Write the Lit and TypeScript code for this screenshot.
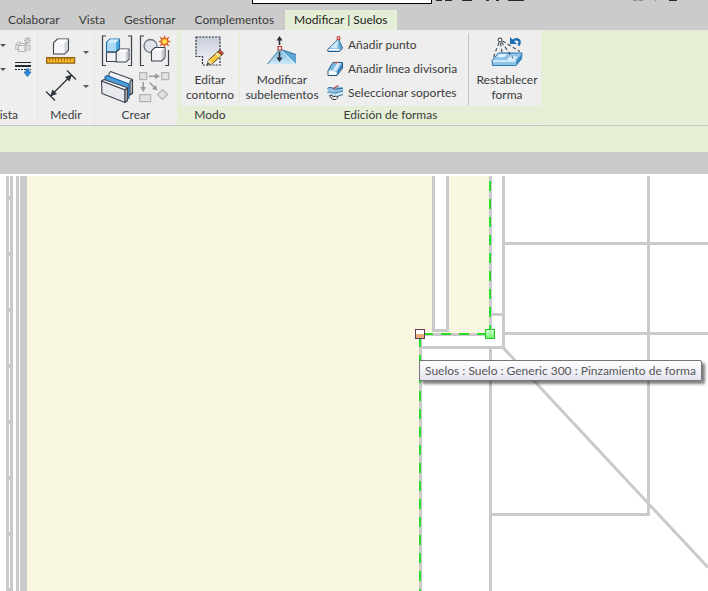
import { LitElement, html, css, svg } from "lit";
import { customElement, property, state } from "lit/decorators.js";

const cube = (x: number, y: number, s: number, d: number, front: string, top: string, side: string) => svg`
  <path d="M${x} ${y}l${d} ${-d}h${s}v${s}l${-d} ${d}h${-s}z" fill=${front} stroke="#3c434d" stroke-width="1.1" stroke-linejoin="round"/>
  <path d="M${x + 0.7} ${y}l${d} ${-d + 0.6}h${s - 1.4}l${-d} ${d}z" fill=${top}/>
  <path d="M${x + s} ${y}l${d - 0.6} ${-d + 0.6}v${s - 0.8}l${-d + 0.6} ${d}z" fill=${side}/>`;

const ICONS: Record<string, { w: number; h: number; art: unknown }> = {
  hidden: {
    w: 17, h: 16,
    art: svg`<g fill="none" stroke="#b4b4b4" stroke-width="1.1">
      <path d="M3.5 8.5l2-2h6l-1.500 2zM3.500 8.500v6h6.500v-6M10 14.500l2-2.500v-5"/>
      <path d="M3 8H.8v4.500H3M1 8l2-3h3M13 8.500h2v3.500l-2 1.500"/>
      <path d="M12.500 0v7M9 3.500h7M10 1l5 5M15 1l-5 5"/></g>
      <circle cx="12.500" cy="3.500" r="1.500" fill="#eee" stroke="#b4b4b4"/>`,
  },
  lines: {
    w: 17, h: 16,
    art: svg`<path d="M0 1.500h16" stroke="#222a33" stroke-width="1"/><path d="M0 5h16" stroke="#222a33" stroke-width="2"/>
      <path d="M0 8.500h16" stroke="#222a33" stroke-dasharray="2 1"/>
      <path d="M11 8h3v3h2l-3.500 4.500L9 11h2z" fill="#2c8de0" stroke="#1464ac" stroke-width=".8"/>`,
  },
  measure: {
    w: 30, h: 28,
    art: svg`${cube(7.5, 5, 11, 4, "#f4f5f8", "#ffffff", "#cfd2d8")}
      <path d="M.6 19.600h28v5.500H.6z" fill="#f0b429" stroke="#8e6112" stroke-width="1.200"/>
      <path d="M3.500 20v2.500M6.500 20v2.500M9.500 20v2.500M12.500 20v2.500M15.500 20v2.500M18.500 20v2.500M21.500 20v2.500M24.500 20v2.500" stroke="#8e6112" stroke-width=".9"/>`,
  },
  dimension: {
    w: 30, h: 32,
    art: svg`<g stroke="#2d343d" stroke-width="1.300"><path d="M4.500 26L25.500 5M0 21.500l9 9M21 .5l9 9"/></g>
      <path d="M4 26.500l2.500-7 4.500 4.500zM26 4.500l-7 2.500 4.500 4.500z" fill="#2d343d"/>`,
  },
  group: {
    w: 32, h: 32,
    art: svg`<path d="M5 1H1.500v29.500H5M27 1h3.500v29.500H27" fill="none" stroke="#3a424d" stroke-width="1.200"/>
      ${cube(15, 17, 10, 3, "#f1f2f6", "#ffffff", "#c9ccd4")}
      ${cube(5.5, 17, 9.5, 0, "#f1f2f6", "#ffffff", "#c9ccd4")}
      <path d="M5.500 7.500L9 4h9.500v9.500L15 17H5.500z" fill="#a9d9f5" stroke="#2671a8" stroke-width="1.100" stroke-linejoin="round"/>
      <path d="M6.200 7.500L9.200 4.600h8.600l-3 2.900z" fill="#d9f1fd"/><path d="M15 7.500l3-3v8.800l-3 3z" fill="#4fa6dc"/>
      <path d="M5.500 17H15l3.500-3" fill="none" stroke="#3c434d" stroke-width="1.100"/>`,
  },
  create: {
    w: 33, h: 32,
    art: svg`<path d="M5 1H1.500v29.500H5M29.500 15v15.500H26" fill="none" stroke="#3a424d" stroke-width="1.200"/>
      <circle cx="11.500" cy="11" r="6.500" fill="#dfe4ea" stroke="#6e7782" stroke-width="1.300"/>
      ${cube(12.5, 16, 10, 3.5, "#f1f2f6", "#ffffff", "#c9ccd4")}
      <path d="M25.500 0l1.300 3.500 3.700-2-2 3.700 3.500 1.300-3.500 1.300 2 3.700-3.700-2-1.300 3.500-1.300-3.500-3.700 2 2-3.700L19 6.500l3.500-1.300-2-3.700 3.700 2z" fill="#d9541a"/>
      <circle cx="25.500" cy="6.500" r="2.600" fill="#ffe25c" stroke="#f4a024"/>`,
  },
  parts: {
    w: 33, h: 33,
    art: svg`<g stroke-linejoin="round" stroke="#3c434d" stroke-width="1.100">
      <path d="M8 2.500L9.500 .5 31.500 8.500V22l-3 2L8 16z" fill="#f1f2f6"/>
      <path d="M29 10.500l2.500-2V22L29 24z" fill="#b9bdc6"/>
      <path d="M4 6l2-1.500 22 8.500v14l-3 1.500L4 20z" fill="#4c9fdd" stroke="#1d5f9e"/>
      <path d="M.5 10l2.500-1.500 23 8-2 2.500z" fill="#fff"/>
      <path d="M.5 10L24 19v12.500L1 22.500z" fill="#e6e8ed"/>
      <path d="M24 19l2.500-2v12.500L24 31.500z" fill="#aeb3bc"/></g>`,
  },
  assembly: {
    w: 33, h: 32,
    art: svg`<g fill="#e2e2e2" stroke="#b2b2b2" stroke-width="1.200"><path d="M.7.7h7v7h-7zM22.700.7h7v7h-7zM.7 22.700h11v7H.7zM23.500 17.500l5 5-5 5-5-5z"/></g>
      <path d="M10 4.200h7M4.200 10v6M10.500 10.500l5 5" stroke="#9c9c9c" stroke-width="1.500"/>
      <path d="M16 1.200l5 3-5 3zM1.200 15l3 5 3-5zM18.500 18.500l-5.500-1.500 4-4z" fill="#9c9c9c"/>`,
  },
  contour: {
    w: 30, h: 32,
    art: svg`<linearGradient id="sheet" x2="0" y2="1"><stop offset="0" stop-color="#c9cedb"/><stop offset="1" stop-color="#f2f3f6"/></linearGradient>
      <path d="M1 1h24v28H7.500v-8.500H1z" fill="url(#sheet)" stroke="#262c35" stroke-width="1.200" stroke-dasharray="2 1.200"/>
      <path d="M12 29l1.500-5L23 15.500l4 3.500-9.500 8.500z" fill="#f6c944" stroke="#5a4518" stroke-width="1"/>
      <path d="M23 15.500l2-1.500 3.500 3-1.500 2z" fill="#d2513c" stroke="#5a2c20" stroke-width=".8"/>
      <path d="M21 17.300l4 3.500" stroke="#f4f0d8" stroke-width="1.500"/><path d="M12 29l1.500-5 4 3.500z" fill="#efdcb4"/><path d="M12 29l.8-2.500 2 1.500z" fill="#222"/>`,
  },
  subelements: {
    w: 30, h: 32,
    art: svg`<linearGradient id="slope" x2="0" y2="1"><stop offset="0" stop-color="#6fb4dc"/><stop offset="1" stop-color="#d3ebf8"/></linearGradient>
      <path d="M.5 28.500L13 13l16 5.500v10z" fill="url(#slope)"/><path d="M13 13l16 5.500v9.500z" fill="#5ba3d0"/>
      <path d="M13 13L28.500 28" stroke="#e6f5fd" stroke-width="1"/>
      <path d="M.5 28L12 14M14 13.500l15 5" stroke="#31719c" stroke-width=".9"/>
      <path d="M12.500 9V3M12.500 16v7" stroke="#28303a" stroke-width="1.600"/>
      <path d="M12.500 0l3 4.500h-6zM12.500 26l3.200-4.500H9.300z" fill="#28303a"/>
      <path d="M11 10.500h3.500V14H11z" fill="#fff" stroke="#c5392d" stroke-width="1.200"/>`,
  },
  point: {
    w: 17, h: 17,
    art: svg`<path d="M.7 13.500L11.500 3l4 9-3 3.500H1z" fill="#8dc3e5" stroke="#235d89" stroke-width="1" stroke-linejoin="round"/>
      <path d="M3 11.500L11 4l-1 8.500z" fill="#cfe7f6"/><path d="M11.500 3l3.500 8.500-2.500 2.500z" fill="#5b9fcd"/><path d="M1.500 13.700h11" stroke="#fff" stroke-width="1.400"/>
      <path d="M10.300.7h2.400v2.800h-2.400z" fill="#fff" stroke="#c5392d" stroke-width="1.100"/>`,
  },
  split: {
    w: 17, h: 17,
    art: svg`<path d="M1 10.500L6 2.500h9.500v5.500L10 15.500H1z" fill="#7db8de" stroke="#1e5682" stroke-width="1" stroke-linejoin="round"/>
      <path d="M5.500 10.500L10.500 3h3L9.500 11z" fill="#d7ecf8"/><path d="M1.600 10.500h3.400L9.500 12v3H1.600z" fill="#f4fafd"/>
      <path d="M10 11.500L15 4v4l-5 6.500z" fill="#3f86ba"/><path d="M7 2.500h4.500" stroke="#b84a42" stroke-width="1.200"/>`,
  },
  supports: {
    w: 17, h: 17,
    art: svg`<path d="M.5 4.500C4 1.500 7 5 10.500 1.500L16 4v3c-4-1-6 3-9 2L.5 7z" fill="#8fc6e8"/>
      <path d="M.5 4.500C4 1.500 7 6.500 10 5l6-1" fill="none" stroke="#2b638d" stroke-width="1"/>
      <path d="M6 5l5-3.500" stroke="#c33f37" stroke-width="1.100"/>
      <path d="M.5 8.500C5 7 6 10.500 10 8.500l6-1.500v3.500c-3 0-4 3.500-8 2.500L.5 11z" fill="#cfe6f4"/>
      <path d="M.5 8.500C5 7 6 10.500 10 8.500l6-1.500M10 12.500l6-2" fill="none" stroke="#38729c" stroke-width="1"/>
      <path d="M2.500 11.500l2.500-.5 1 2 3-1 2 1.500-2 2H6L4 14z" fill="#f8f8f8" stroke="#333b45" stroke-width="1"/>`,
  },
  reset: {
    w: 33, h: 32,
    art: svg`<path d="M1 24.500L7.500 17H31l-.5 6-5.500 6.500H1.500z" fill="#8fc5e8" stroke="#2c79b0" stroke-width="1" stroke-linejoin="round"/>
      <path d="M8 18h8l-2.500 3H5.500zM19 20.500h7.500L23.500 24H16zM5 23h7" fill="#e2f3fd"/>
      <path d="M2 25h23" fill="none" stroke="#f2faff" stroke-width="1.300"/>
      <path d="M25 25v4.500l5.500-6.500v-5z" fill="#3b8bc2"/>
      <path d="M8 6.500L2.500 21M9.500 7l1.500 10M10.500 6L22 22.500M11.500 5L29 15.500" fill="none" stroke="#4a525d" stroke-width="1.200" stroke-dasharray="3.500 2.500"/>
      <circle cx="9" cy="4" r="1.900" fill="#fff" stroke="#4a525d" stroke-width="1.100"/>
      <path d="M22 4.500c4.500-3 8.500 0 5.500 5" fill="none" stroke="#1c6fb3" stroke-width="2.400"/><path d="M19 1v7h7z" fill="#1c6fb3"/>`,
  },
};

@customElement("ribbon-icon")
class RibbonIcon extends LitElement {
  @property() name = "";
  static styles = css`
    :host { display: block; flex: none; }
    svg { display: block; overflow: visible; }
  `;
  render() {
    const i = ICONS[this.name];
    return html`<svg width=${i.w} height=${i.h} viewBox="0 0 ${i.w} ${i.h}" aria-hidden="true">${i.art}</svg>`;
  }
}

@customElement("ribbon-panel")
class RibbonPanel extends LitElement {
  @property() label = "";
  static styles = css`
    :host { display: flex; flex-direction: column; flex: none; box-sizing: border-box; background: #eeeeee; }
    .body { display: flex; height: 76px; box-sizing: border-box; }
    .title { display: flex; justify-content: center; height: 18px; line-height: 18px; white-space: nowrap; background: var(--title-bg, #eeeeee); }
    :host([cut]) { overflow: hidden; }
    :host([cut]) .title { justify-content: flex-end; padding-right: 19px; }
  `;
  render() {
    return html`<div class="body"><slot></slot></div><div class="title">${this.label}</div>`;
  }
}

@customElement("plan-view")
class PlanView extends LitElement {
  static styles = css`
    :host { display: block; position: relative; overflow: hidden; background: #fff; border-top: 2px solid #fff; }
    .plan { display: block; width: 100%; height: 415px; }
    .wall { fill: none; stroke: #cacaca; stroke-width: 3; }
    .floor { fill: #f9f7e2; }
    .edge { fill: none; stroke: #2bdc2b; stroke-width: 2; stroke-dasharray: 10 8; }
    .tip {
      position: absolute; left: 419px; top: 184px; box-sizing: border-box; height: 21px; padding: 0 5px;
      line-height: 19px; white-space: nowrap; color: #575757; border: 1px solid #767676; border-radius: 2px;
      background: linear-gradient(#ffffff, #e4e5f0); box-shadow: 3px 3px 3px rgba(0, 0, 0, 0.5);
    }
  `;
  render() {
    const joints = [20, 76, 132, 188, 244, 300, 356, 412];
    return html`
      <svg class="plan" role="img" aria-label="Plano de planta">
        <defs>
          <linearGradient id="hot" x2="0" y2="1"><stop offset=".45" stop-color="#fff"/><stop offset=".55" stop-color="#e9aa7c"/></linearGradient>
          <linearGradient id="ok" x2="0" y2="1"><stop offset="0" stop-color="#d4ffd4"/><stop offset="1" stop-color="#6cf56c"/></linearGradient>
        </defs>
        <path class="floor" d="M27 0H490V158H420V415H27z"/>
        <path d="M20 0h7v415h-7z" fill="#cacacc"/>
        <path class="wall" d="M7.500 0V415M11.500 0V415M17.500 0V415"/>
        ${joints.map((y) => svg`<rect x="9" y=${y} width="3" height="4" fill="#cacaca"/>`)}
        <path d="M433 0h14v155h-14z" fill="#fff"/>
        <path class="wall" d="M433.500 0V154.500H447.500V0"/>
        <path class="wall" d="M490.500 0V158.500H420.500V415M503.500 0V171.500H421M503 67.500H708M492 138.500H503M504 157.500H708M490.500 173V415M648.500 0V338.500H490M503 171.500L708 391.500"/>
        <path class="edge" d="M490 5V158"/>
        <path class="edge" d="M423 158H488"/>
        <path class="edge" d="M420 161V415"/>
        <rect x="415.500" y="153.500" width="9" height="9" fill="url(#hot)" stroke="#5c3a5a"/>
        <rect x="485.500" y="153.500" width="9" height="9" fill="url(#ok)" stroke="#28c828"/>
      </svg>
      <div class="tip" role="tooltip">Suelos : Suelo : Generic 300 : Pinzamiento de forma</div>`;
  }
}

@customElement("app-root")
class AppRoot extends LitElement {
  @state() private active = "Modificar | Suelos";

  static styles = css`
    :host { display: flex; flex-direction: column; min-height: 100vh; overflow: hidden; background: #fff; color: #3b3b3b; font: 12px/15px Lato, "Open Sans", sans-serif; }
    button { font: inherit; color: inherit; border: 0; background: none; padding: 0; margin: 0; white-space: nowrap; }
    .top { display: flex; height: 10px; background: #cbcbcb; align-items: flex-start; }
    .search { box-sizing: border-box; width: 180px; height: 4px; margin: 0 4px 0 252px; padding: 0; border: 1px solid #000; border-top: 0; background: #fff; }
    .tools { display: block; }
    .tabs { display: flex; gap: 3px; height: 20px; background: #cbcbcb; }
    .tab { padding: 0 8px; line-height: 20px; }
    .tab.active { padding: 0 9px; background: #e4efd6; color: #222; }
    .ribbon { display: flex; height: 95px; background: #e4efd6; border-bottom: 1px solid #c4cac4; color: #3b3b3b; }
    .view { width: 38px; border-right: 1px solid #e6e8da; }
    .measure { width: 57px; border-right: 1px solid #e6e8da; }
    .make { width: 82px; margin-right: 4px; }
    .mode { width: 58px; margin-right: 1px; --title-bg: #e4efd6; }
    .shapes { width: 301px; --title-bg: #e4efd6; }
    .stack { display: flex; flex-direction: column; gap: 8px; padding: 7px 0 0; }
    .row { display: flex; align-items: center; gap: 9px; height: 16px; }
    .arrow { width: 0; height: 0; border: 3px solid transparent; border-top-color: #555; border-bottom: 0; flex: none; }
    .cells { display: grid; grid-template-columns: 31px 6px; column-gap: 6px; row-gap: 4px; padding: 8px 0 0 8px; align-content: start; align-items: center; }
    .pair { display: grid; grid-template-columns: 33px 33px; gap: 4px 5px; padding: 5px 0 0 6px; align-content: start; }
    .big { display: flex; flex-direction: column; align-items: center; gap: 4px; padding-top: 6px; width: 100%; }
    .sub { width: 84px; margin-right: 3px; flex: none; }
    .reset { flex: 1; border-left: 1px solid #c4c4c4; height: 72px; margin-top: 3px; padding-top: 3px; padding-left: 4px; }
    .list { display: flex; flex-direction: column; gap: 8px; padding: 6px 0 0; width: 141px; flex: none; }
    .item { display: flex; align-items: center; gap: 4px; height: 16px; }
    .options { height: 26px; background: #e4efd6; }
    .bar { height: 22px; background: #cbcbcb; }
    .plan { flex: 1; }
  `;

  private tab(name: string) {
    return html`<button class="tab ${this.active === name ? "active" : ""}" role="tab" aria-selected=${this.active === name} @click=${() => (this.active = name)}>${name}</button>`;
  }

  private icon(name: string, label: string) {
    return html`<button aria-label=${label}><ribbon-icon name=${name}></ribbon-icon></button>`;
  }

  private item(icon: string, label: string) {
    return html`<button class="item"><ribbon-icon name=${icon}></ribbon-icon>${label}</button>`;
  }

  render() {
    return html`
      <header class="top">
        <input class="search" aria-label="Buscar" />
        <svg class="tools" width="260" height="2" aria-hidden="true">
          <path d="M0 .5h6M9 .5h7M26 .5h10M50 .5h3M60 .5h3M72 .5h16M233 .5h8" stroke="#2a2a2e"/>
          <path d="M197 .5h4M203 .5h4M219 .5h1" stroke="#8e8e8e"/>
        </svg>
      </header>
      <nav class="tabs" role="tablist">
        ${["Colaborar", "Vista", "Gestionar", "Complementos", "Modificar | Suelos"].map((t) => this.tab(t))}
      </nav>
      <section class="ribbon">
        <ribbon-panel class="view" label="Vista" cut>
          <div class="stack">
            <div class="row"><span class="arrow"></span>${this.icon("hidden", "Ocultar")}</div>
            <div class="row"><span class="arrow"></span>${this.icon("lines", "Líneas finas")}</div>
          </div>
        </ribbon-panel>
        <ribbon-panel class="measure" label="Medir">
          <div class="cells">
            ${this.icon("measure", "Medir")}<span class="arrow"></span>
            ${this.icon("dimension", "Cota")}<span class="arrow"></span>
          </div>
        </ribbon-panel>
        <ribbon-panel class="make" label="Crear">
          <div class="pair">
            ${this.icon("group", "Crear grupo")}${this.icon("create", "Crear similar")}
            ${this.icon("parts", "Crear piezas")}${this.icon("assembly", "Crear montaje")}
          </div>
        </ribbon-panel>
        <ribbon-panel class="mode" label="Modo">
          <button class="big"><ribbon-icon name="contour"></ribbon-icon><span>Editar<br />contorno</span></button>
        </ribbon-panel>
        <ribbon-panel class="shapes" label="Edición de formas">
          <button class="big sub"><ribbon-icon name="subelements"></ribbon-icon><span>Modificar<br />subelementos</span></button>
          <div class="list">
            ${this.item("point", "Añadir punto")}
            ${this.item("split", "Añadir línea divisoria")}
            ${this.item("supports", "Seleccionar soportes")}
          </div>
          <button class="big reset"><ribbon-icon name="reset"></ribbon-icon><span>Restablecer<br />forma</span></button>
        </ribbon-panel>
      </section>
      <div class="options"></div>
      <div class="bar"></div>
      <plan-view class="plan"></plan-view>`;
  }
}
